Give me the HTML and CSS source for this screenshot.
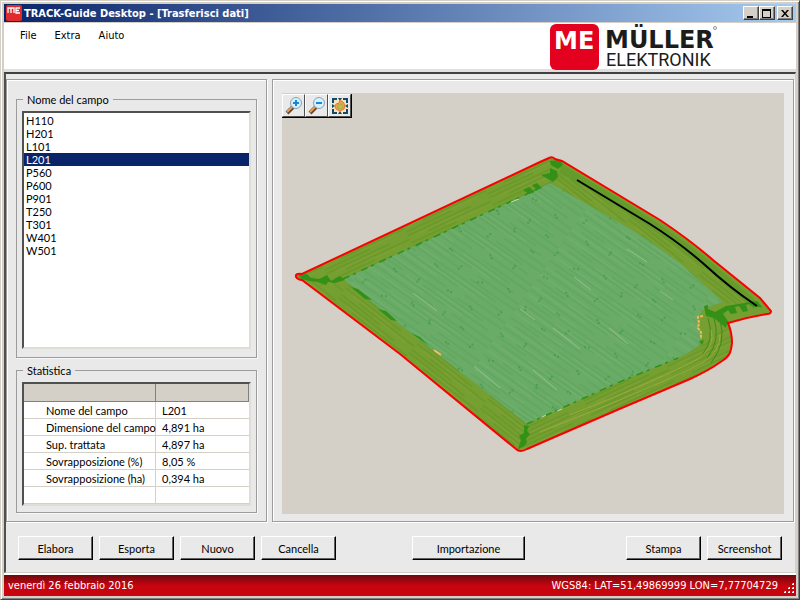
FILE: index.html
```html
<!DOCTYPE html>
<html lang="it">
<head>
    <meta charset="UTF-8">
    <meta name="viewport" content="width=device-width, initial-scale=1.0">
    <title>TRACK-Guide Desktop</title>
    <link rel="stylesheet" href="styles.css">
</head>
<body>
    <div class="window">
        <div class="titlebar">
            <svg class="app-icon" viewBox="0 0 16 16">
                <rect width="16" height="16" rx="2" fill="#e02a2e"/>
                <path d="M2 8V3H8V8M5 3V8M14 3H10V8H14M10 5.500H13" fill="none" stroke="#fff" stroke-width="1.300"/>
            </svg>
            <h1>TRACK-Guide Desktop - [Trasferisci dati]</h1>
            <div class="win-buttons">
                <button class="win-btn" aria-label="Riduci"><svg viewBox="0 0 12 11"><path d="M2 8H8V10H2Z"/></svg></button>
                <button class="win-btn" aria-label="Ingrandisci"><svg viewBox="0 0 12 11"><path fill-rule="evenodd" d="M1 1H10V10H1ZM2 3V9H9V3Z"/></svg></button>
                <button class="win-btn win-close" aria-label="Chiudi"><svg viewBox="0 0 12 11"><path d="M2 2H4L6 4.500L8 2H10L7 5.500L10 9H8L6 6.500L4 9H2L5 5.500Z"/></svg></button>
            </div>
        </div>

        <div class="header">
            <div class="menu">
                <button>File</button>
                <button>Extra</button>
                <button>Aiuto</button>
            </div>
            <svg class="logo" viewBox="550 23 170 48">
                <rect x="550" y="24" width="49" height="46" rx="6" fill="#e4001f"/>
                <text class="logo-bold" x="554" y="49" fill="#fff">ME</text>
                <text class="logo-bold" x="605" y="48" fill="#1c1c1a">MÜLLER</text>
                <text class="logo-thin" x="606" y="66" fill="#1c1c1a">ELEKTRONIK</text>
                <circle cx="715" cy="28" r="1.500" fill="none" stroke="#777" stroke-width="0.800"/>
            </svg>
        </div>

        <div class="workspace">
            <div class="panels">
                <div class="panel side">
                    <fieldset class="group fields">
                        <legend><label for="fieldList">Nome del campo</label></legend>
                        <select id="fieldList" class="field-list" size="12">
                            <option>H110</option>
                            <option>H201</option>
                            <option>L101</option>
                            <option selected>L201</option>
                            <option>P560</option>
                            <option>P600</option>
                            <option>P901</option>
                            <option>T250</option>
                            <option>T301</option>
                            <option>W401</option>
                            <option>W501</option>
                        </select>
                    </fieldset>
                    <fieldset class="group">
                        <legend>Statistica</legend>
                        <div class="stats">
                            <table>
                                <thead>
                                    <tr><th class="name"></th><th></th></tr>
                                </thead>
                                <tbody>
                                    <tr><td class="name">Nome del campo</td><td>L201</td></tr>
                                    <tr><td class="name">Dimensione del campo</td><td>4,891 ha</td></tr>
                                    <tr><td class="name">Sup. trattata</td><td>4,897 ha</td></tr>
                                    <tr><td class="name">Sovrapposizione (%)</td><td>8,05 %</td></tr>
                                    <tr><td class="name">Sovrapposizione (ha)</td><td>0,394 ha</td></tr>
                                    <tr><td class="name"></td><td></td></tr>
                                    <tr><td class="name"></td><td></td></tr>
                                </tbody>
                            </table>
                        </div>
                    </fieldset>
                </div>

                <div class="panel map-panel">
                    <div class="map">
                        <svg class="field-map" viewBox="282 93 502 421">
                            <defs>
                                <path id="border" d="M296 277Q295 273 302 274L540 162L549 158Q552 156 555 159L562 161L660 220Q690 240 713 260L760 298L771 311Q771 314 767 314Q748 317 728 323C731 330 732 335 732 343C731 352 730 356 722 361Q708 371 690 379L617 410L527 449Q520 453 516 449L400 354L302 280Q298 280 296 277Z"/>
                                <path id="inner" d="M343 279L540 188L550 183L620 223Q653 242 680 263L723 302L705 308Q697 316 698 323L702 340Q698 349 678 358L617 383L527 424L467 377L413 335Z"/>
                                <clipPath id="clipBorder"><use href="#border"/></clipPath>
                                <clipPath id="clipInner"><use href="#inner"/></clipPath>
                                <!-- tractor rows -->
                                <pattern id="rows" width="150" height="23" patternUnits="userSpaceOnUse" patternTransform="rotate(35)">
                                    <path d="M0 2H80M95 5H150M20 9H130M0 13H35M60 14H140M10 18H90M100 21H150" stroke="#429a48" stroke-width="0.400"/>
                                    <path d="M0 7H60M75 11H120M40 16H110M0 21H65" stroke="#8cbc82" stroke-width="0.300"/>
                                </pattern>
                                <pattern id="dots" width="97" height="79" patternUnits="userSpaceOnUse" patternTransform="rotate(-8)">
                                    <path d="M5 6h2m0 2h2M28 14h2m1 -2h2M61 5h2m-1 3h2M84 19h2m-4 2h2M14 34h2m1 2h2M45 30h2m2 1h2M74 41h2m-1 3h2M6 57h2m0 -2h2M34 53h2m-1 3h2M61 65h2m1 -2h2M89 61h2m-3 3h2M22 72h2m0 2h2" stroke="#2e923b" stroke-width="1"/>
                                </pattern>
                                <pattern id="edgeUp" width="90" height="12" patternUnits="userSpaceOnUse" patternTransform="rotate(-25)">
                                    <path d="M0 2H70M20 6H90M0 10H50" stroke="#538d1f" stroke-width="0.600"/>
                                    <path d="M10 4H60M40 8H80" stroke="#94a53e" stroke-width="0.500"/>
                                </pattern>
                                <pattern id="edgeDown" width="90" height="12" patternUnits="userSpaceOnUse" patternTransform="rotate(38)">
                                    <path d="M0 2H70M20 6H90M0 10H50" stroke="#538d1f" stroke-width="0.600"/>
                                    <path d="M10 4H60M40 8H80" stroke="#94a53e" stroke-width="0.500"/>
                                </pattern>
                            </defs>

                            <use href="#border" fill="#759f31"/>
                            <g clip-path="url(#clipBorder)">
                                <path d="M290 277L552 150V186L343 279Z" fill="url(#edgeUp)"/>
                                <path d="M527 424L700 347L735 320L740 370L520 455Z" fill="url(#edgeUp)"/>
                                <path d="M290 277H343L527 424L520 455Z" fill="url(#edgeDown)"/>
                                <path d="M550 155L775 312L723 302L550 183Z" fill="url(#edgeDown)"/>
                                <g fill="none" stroke="#5f932a">
                                    <path d="M561 169Q660 225 714 270L756 306" stroke-width="8" stroke="#649b2b"/>
                                    <path d="M708 318Q715 340 702 355M714 318Q721 341 707 358M720 320Q727 343 711 363" stroke="#3d8a18"/>
                                    <path d="M711 330Q716 346 698 359Q665 377 570 415M720 334Q721 350 704 362Q660 385 540 432" stroke="#a0a83d"/>
                                    <path d="M362 288L430 344L525 418" stroke="#3d911e" stroke-width="1.500"/>
                                </g>
                            </g>

                            <use href="#inner" fill="#6aab67"/>
                            <g clip-path="url(#clipInner)">
                                <use href="#inner" fill="url(#rows)"/>
                                <use href="#inner" fill="url(#dots)"/>
                                <path d="M553 328L580 349M609 328L628 344M627 249L647 262M574 277L591 290M533 370L557 390M474 366L500 388M413 293L437 311M660 291L673 300M520 309L535 320" stroke="#a9c9a1" stroke-width="0.700"/>
                            </g>
                            <path d="M343 279L540 188M527 424L617 383L678 358" fill="none" stroke="#2b901d" stroke-width="1.500" stroke-dasharray="7 4 3 6"/>

                            <!-- overlaps at the headland corners -->
                            <g fill="#329116">
                                <path d="M298 275L307 274L311 278L319 279L327 275L331 281L340 276L345 280L335 283L328 282L326 285L318 282L309 281L302 279Z"/>
                                <path d="M550 161L560 160L563 165L558 169L551 165ZM541 175L550 173L550 168L557 171L558 177L553 182L548 179ZM523 190L529 187L535 192L529 194ZM532 185L537 183L542 188L537 190Z"/>
                                <path d="M524 425L529 426L527 431L530 434L526 439L527 443L523 447L518 449L521 440L519 436L524 433Z"/>
                                <path d="M351 287L358 289L372 300L365 299ZM378 309L386 311L397 321L391 320ZM411 333L420 337L429 346Z"/>
                                <path d="M704 306L708 305V309L715 312L726 306L757 301L762 307L754 307L749 304L746 305L748 311L743 312L739 306L735 307L737 313L731 314L728 310L723 314L728 321L726 328L714 318L706 316Z"/>
                                <path d="M699 341L704 340L702 345Z"/>
                            </g>
                            <path d="M703 316L698 317L699 323L698 328L701 332V339" fill="none" stroke="#e7bd5c" stroke-width="2" stroke-dasharray="3 1"/>
                            <path d="M434 350L441 355" stroke="#edbf66" stroke-width="2"/>
                            <path d="M511 202L519 199M542 417L546 415M557 411L562 409" stroke="#c5d8b8" stroke-width="1"/>

                            <use href="#border" fill="none" stroke="#fb0000" stroke-width="2"/>
                            <!-- guidance line -->
                            <path d="M577 180L650 224Q680 243 705 265Q730 288 757 306" fill="none" stroke="#000" stroke-width="2"/>
                        </svg>

                        <div class="map-tools">
                            <button aria-label="Zoom avanti">
                                <svg viewBox="0 0 20 20">
                                    <path d="M3 17L9 11" stroke="#604737" stroke-width="4"/>
                                    <path d="M3 16L8 11" stroke="#eda04c" stroke-width="2"/>
                                    <circle cx="12" cy="7" r="5.500" fill="#d4f1fc" stroke="#8f9fb2"/>
                                    <path d="M12 4V10M9 7H15" stroke="#1787dc" stroke-width="2"/>
                                </svg>
                            </button>
                            <button aria-label="Zoom indietro">
                                <svg viewBox="0 0 20 20">
                                    <path d="M3 17L9 11" stroke="#604737" stroke-width="4"/>
                                    <path d="M3 16L8 11" stroke="#eda04c" stroke-width="2"/>
                                    <circle cx="12" cy="7" r="5.500" fill="#d4f1fc" stroke="#8f9fb2"/>
                                    <path d="M9 7H15" stroke="#1787dc" stroke-width="2"/>
                                </svg>
                            </button>
                            <button aria-label="Adatta alla finestra">
                                <svg viewBox="0 0 20 20">
                                    <rect x="2" y="2" width="16" height="16" fill="#f5e4bd"/>
                                    <path d="M3 7V3H7M13 3H17V7M17 13V17H13M7 17H3V13" fill="none" stroke="#104a68" stroke-width="2"/>
                                    <path d="M8 2H12L10 5ZM8 18H12L10 15ZM2 8V12L5 10ZM18 8V12L15 10Z" fill="#104a68"/>
                                    <path d="M6 8L9 7L10 4L13 6L15 9L14 13L10 15L6 13L5 10Z" fill="#f0a052" stroke="#ee7044"/>
                                    <path d="M8 9L12 8L13 11L10 13L8 12Z" fill="#cdbb3b" stroke="#99b63a"/>
                                </svg>
                            </button>
                        </div>
                    </div>
                </div>
            </div>

            <div class="actions">
                <button>Elabora</button>
                <button>Esporta</button>
                <button>Nuovo</button>
                <button>Cancella</button>
                <button class="import">Importazione</button>
                <button class="print">Stampa</button>
                <button>Screenshot</button>
            </div>
        </div>

        <div class="statusbar">
            <span>venerdì 26 febbraio 2016</span>
            <span class="coords">WGS84: LAT=51,49869999 LON=7,77704729</span>
            <svg class="grip" viewBox="0 0 12 12">
                <path d="M9 1h2v2h-2zM5 5h2v2h-2zM9 5h2v2h-2zM1 9h2v2h-2zM5 9h2v2h-2zM9 9h2v2h-2z" fill="#fff"/>
                <path d="M9 1h1v1h-1zM5 5h1v1h-1zM9 5h1v1h-1zM1 9h1v1h-1zM5 9h1v1h-1zM9 9h1v1h-1z" fill="#888"/>
            </svg>
        </div>
    </div>
</body>
</html>
```
FILE: styles.css
```css
* {
    box-sizing: border-box;
}

body {
    margin: 0;
    font-family: Lato, "Liberation Sans", Arial, sans-serif;
    font-size: 11px;
    line-height: 13px;
    color: #000;
    background: #d4d0c8;
}

button, select {
    font: inherit;
    color: inherit;
    border-radius: 0;
}

.window {
    display: flex;
    flex-direction: column;
    min-height: 100vh;
    padding: 3px;
    border: 1px solid;
    border-color: #d4d0c8 #404040 #404040 #d4d0c8;
    box-shadow: inset 1px 1px #fff, inset -1px -1px #808080;
}

/* title bar */
.titlebar {
    display: flex;
    align-items: center;
    height: 18px;
    padding: 0 3px 0 2px;
    background: linear-gradient(to right, #0a246a, #a6caf0);
}

.app-icon {
    width: 16px;
    height: 16px;
}

.titlebar h1 {
    flex: 1;
    margin: 0 0 0 2px;
    font-family: "DejaVu Sans Condensed", "DejaVu Sans", sans-serif;
    font-size: 11px;
    font-weight: bold;
    color: #fff;
    white-space: nowrap;
}

.win-buttons {
    display: flex;
}

.win-btn {
    width: 16px;
    height: 14px;
    padding: 0;
    background: #d4d0c8;
    border: 1px solid;
    border-color: #fff #404040 #404040 #fff;
    box-shadow: inset -1px -1px #808080;
}

.win-btn svg {
    display: block;
    width: 12px;
    height: 11px;
    margin-left: 1px;
}

.win-close {
    margin-left: 2px;
}

/* menu and logo */
.header {
    display: flex;
    justify-content: space-between;
    height: 50px;
    padding-right: 76px;
    background: #fff;
    border-top: 1px solid #d4d0c8;
    border-bottom: 3px solid #dfdfdf;
}

.menu {
    display: flex;
    gap: 18px;
    padding: 6px 0 0 16px;
    align-items: flex-start;
}

.menu button {
    padding: 0;
    background: none;
    border: none;
    font-family: "DejaVu Sans Condensed", "DejaVu Sans", sans-serif;
}

.logo {
    width: 170px;
    height: 48px;
}

.logo-bold {
    font-family: "DejaVu Sans", sans-serif;
    font-weight: bold;
    font-size: 24px;
}

.logo-thin {
    font-family: Roboto, sans-serif;
    font-size: 18px;
}

/* workspace */
.workspace {
    flex: 1;
    display: flex;
    flex-direction: column;
    background: #e9e9e9;
    border: 2px solid;
    border-color: #404040 #d4d0c8 #d4d0c8 #505050;
    border-right-width: 1px;
    border-bottom-width: 1px;
    margin-bottom: 2px;
    box-shadow: 0 2px #fff;
}

.panels {
    flex: 1;
    display: flex;
    gap: 5px;
    padding: 5px 1px 0 0;
}

.panel {
    border: 1px solid #9c9c9c;
    box-shadow: 1px 1px #fff, inset 1px 1px #fff;
}

.side {
    display: flex;
    flex-direction: column;
    gap: 6px;
    width: 261px;
    padding: 13px 9px 8px;
}

.group {
    min-width: 0;
    margin: 0;
    padding: 5px 5px 6px;
    border: 1px solid #9c9c9c;
    box-shadow: 1px 1px #f8f8f8;
}

.group legend {
    margin-left: 1px;
    padding: 0 4px;
}

.fields {
    flex: 1;
    padding-bottom: 8px;
}

.field-list {
    display: block;
    width: 100%;
    height: 100%;
    padding: 1px 0 0;
    overflow: hidden;
    background: #fff;
    border: 2px solid;
    border-color: #505050 #e0ddd6 #e0ddd6 #505050;
    outline: none;
}

.field-list option {
    height: 13px;
    min-height: 13px;
    padding: 0 2px;
    line-height: 13px;
}

.field-list option:checked {
    color: #fff !important;
    background: #0a246a linear-gradient(#0a246a, #0a246a);
}

.stats {
    height: 124px;
    overflow: hidden;
    background: #fff;
    border: 2px solid;
    border-color: #505050 #e0ddd6 #e0ddd6 #505050;
}

.stats table {
    width: 100%;
    table-layout: fixed;
    border-collapse: separate;
    border-spacing: 0;
}

.stats th {
    height: 18px;
    padding: 0;
    background: #d4d0c8;
    border-right: 1px solid #808080;
    border-bottom: 1px solid #808080;
}

.stats td {
    height: 17px;
    padding: 1px 0 0 6px;
    line-height: 15px;
    border-bottom: 1px solid #d4d0c8;
    white-space: nowrap;
}

.stats .name {
    width: 132px;
    border-right: 1px solid #d4d0c8;
}

.stats td.name {
    padding-left: 22px;
}

.stats th.name {
    border-right-color: #808080;
}

/* map */
.map-panel {
    flex: 1;
    display: flex;
    padding: 13px 9px 7px;
}

.map {
    position: relative;
    flex: 1;
    background: #d4d0c8;
}

.field-map {
    display: block;
    width: 100%;
    height: 100%;
}

.map-tools {
    position: absolute;
    top: 1px;
    left: 0;
    display: flex;
    border-right: 1px solid #000;
    border-bottom: 1px solid #000;
}

.map-tools button {
    width: 23px;
    height: 23px;
    padding: 1px;
    background: #e9e9e9;
    border: 1px solid;
    border-color: #fff #505050 #505050 #fff;
}

.map-tools svg {
    display: block;
    width: 20px;
    height: 20px;
}

/* buttons under the panels */
.actions {
    display: flex;
    gap: 6px;
    padding: 14px 13px 12px 12px;
}

.actions button {
    width: 75px;
    height: 24px;
    padding: 0;
    background: #e9e9e9;
    border: 1px solid;
    border-color: #fff #000 #000 #fff;
    box-shadow: inset -1px -1px #606060;
}

.actions .import {
    width: 113px;
    margin-left: 70px;
}

.actions .print {
    margin-left: auto;
}

/* status bar */
.statusbar {
    display: flex;
    align-items: center;
    height: 21px;
    padding: 0 1px 0 4px;
    color: #fff;
    font-family: "DejaVu Sans Condensed", "DejaVu Sans", sans-serif;
    background: linear-gradient(#6c0a10, #c8040f 50%);
}

.coords {
    margin-left: auto;
}

.grip {
    width: 12px;
    height: 12px;
    margin: 5px 0 0 5px;
}
```
